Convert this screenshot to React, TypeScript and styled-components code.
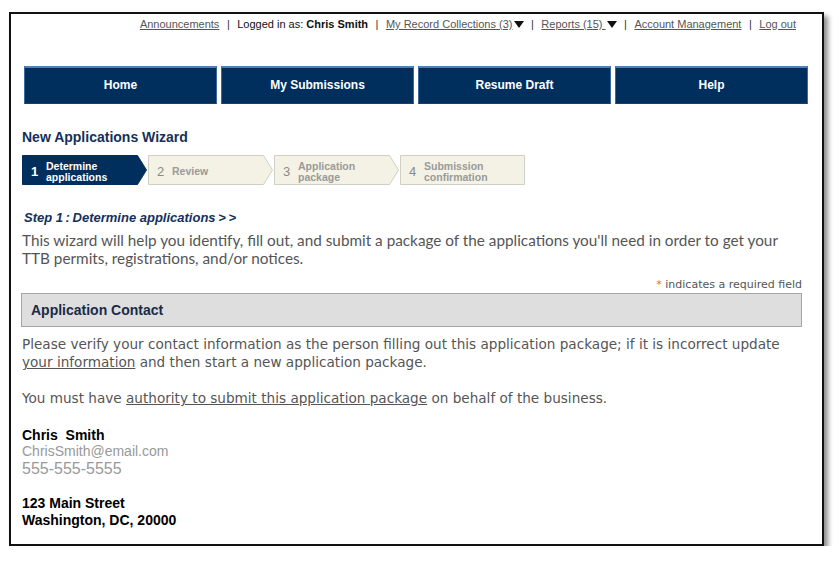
import React from "react";
import styled, { createGlobalStyle } from "styled-components";

const Global = createGlobalStyle`
  html, body { margin: 0; padding: 0; background: #fff; }
  body { font-family: "Liberation Sans", Arial, sans-serif; }
`;

const Frame = styled.div`
  box-sizing: border-box;
  margin: 12px 0 0 9px;
  width: 815px;
  height: 534px;
  border: 2px solid #111;
  background: #fff;
  box-shadow: 4px 4px 5px rgba(0, 0, 0, 0.45);
  overflow: hidden;
`;

const TopLinks = styled.div`
  display: flex;
  justify-content: flex-end;
  align-items: center;
  padding: 3px 26px 0 0;
  height: 14px;
  font-size: 11px;
  line-height: 14px;
  color: #111;
  white-space: pre;
`;

const TopLink = styled.a`
  color: #555;
  text-decoration: underline;
  cursor: pointer;
`;

const Sep = styled.span`
  color: #333;
  margin: 0 7.5px;
`;

const Caret = styled.svg`
  width: 10px;
  height: 7px;
  margin-left: 1px;
`;

const Nav = styled.nav`
  display: grid;
  grid-template-columns: repeat(4, 193px);
  gap: 4px;
  margin: 35px 0 0 13px;
`;

const NavButton = styled.div`
  box-sizing: border-box;
  height: 38px;
  background: #002f5e;
  border-top: 2px solid #4d7fb8;
  border-left: 1px solid #3a6aa0;
  border-right: 1px solid #3a6aa0;
  border-bottom: 1px solid #1d3f66;
  color: #fff;
  font-weight: bold;
  font-size: 12px;
  display: flex;
  align-items: center;
  justify-content: center;
  padding-bottom: 2px;
`;

const Content = styled.div`
  padding: 0 20px 0 11px;
`;

const Title = styled.h1`
  margin: 24px 0 0 0;
  font-size: 14px;
  line-height: 18px;
  font-weight: bold;
  color: #15305a;
`;

const Steps = styled.div`
  display: flex;
  gap: 1px;
  margin-top: 9px;
  height: 30px;
`;

const Step = styled.div<{ $active?: boolean }>`
  position: relative;
  width: 125px;
  height: 30px;
  display: flex;
  align-items: center;
  padding: 3px 0 0 9px;
  box-sizing: border-box;
  color: ${(p) => (p.$active ? "#fff" : "#9a9a9a")};
`;

const StepShape = styled.svg`
  position: absolute;
  inset: 0;
  width: 125px;
  height: 30px;
`;

const StepNum = styled.span<{ $active?: boolean }>`
  position: relative;
  font-size: 13px;
  font-weight: ${(p) => (p.$active ? "bold" : "normal")};
  color: ${(p) => (p.$active ? "#fff" : "#8a8a8a")};
  width: 15px;
`;

const StepLabel = styled.span`
  position: relative;
  font-size: 10.5px;
  font-weight: bold;
  line-height: 10.5px;
`;

const StepHeading = styled.div`
  margin: 24px 0 0 2px;
  font-size: 13px;
  line-height: 18px;
  font-style: italic;
  font-weight: bold;
  color: #15305a;
  white-space: pre;
`;

const Intro = styled.p`
  margin: 4px 0 0 0;
  font-family: Lato, "Open Sans", sans-serif;
  font-size: 15.3px;
  line-height: 18px;
  color: #555;
`;

const Required = styled.div`
  margin-top: 10px;
  text-align: right;
  font-family: "DejaVu Sans", Verdana, sans-serif;
  font-size: 11px;
  line-height: 14px;
  color: #555;
  padding-top: 1px;
`;

const Star = styled.span`
  color: #e0703c;
`;

const SectionBox = styled.div`
  box-sizing: border-box;
  margin: 1px 0 0 -1px;
  height: 34px;
  background: #dedede;
  border: 1px solid #a6a6a6;
  display: flex;
  align-items: center;
  padding-left: 9px;
  font-size: 14px;
  font-weight: bold;
  color: #1a2b48;
`;

const Body = styled.p<{ $gap: number }>`
  margin: ${(p) => p.$gap}px 0 0 0;
  font-family: "DejaVu Sans", Verdana, sans-serif;
  font-size: 13.6px;
  line-height: 18px;
  color: #555;
`;

const BodyLink = styled.a`
  color: #555;
  text-decoration: underline;
`;

const Contact = styled.div`
  margin-top: 20px;
  display: flex;
  flex-direction: column;
`;

const Line = styled.div<{ $size: number; $lh: number; $bold?: boolean; $gray?: boolean }>`
  font-size: ${(p) => p.$size}px;
  line-height: ${(p) => p.$lh}px;
  font-weight: ${(p) => (p.$bold ? "bold" : "normal")};
  color: ${(p) => (p.$gray ? "#999" : "#000")};
  white-space: pre;
`;

const Address = styled.div`
  margin-top: 16px;
`;

const CaretIcon = () => (
  <Caret viewBox="0 0 10 7">
    <polygon points="0,0 10,0 5,7" fill="#111" />
  </Caret>
);

const steps = [
  { n: "1", label: ["Determine", "applications"], active: true, arrow: true },
  { n: "2", label: ["Review"], active: false, arrow: true },
  { n: "3", label: ["Application", "package"], active: false, arrow: true },
  { n: "4", label: ["Submission", "confirmation"], active: false, arrow: false },
];

export default function App() {
  return (
    <>
      <Global />
      <Frame>
        <TopLinks>
          <TopLink>Announcements</TopLink>
          <Sep>|</Sep>
          <span>Logged in as: </span>
          <b>Chris Smith</b>
          <Sep>|</Sep>
          <TopLink>My Record Collections (3)</TopLink>
          <CaretIcon />
          <Sep>|</Sep>
          <TopLink>Reports (15) </TopLink>
          <CaretIcon />
          <Sep>|</Sep>
          <TopLink>Account Management</TopLink>
          <Sep>|</Sep>
          <TopLink>Log out</TopLink>
        </TopLinks>
        <Nav>
          <NavButton>Home</NavButton>
          <NavButton>My Submissions</NavButton>
          <NavButton>Resume Draft</NavButton>
          <NavButton>Help</NavButton>
        </Nav>
        <Content>
          <Title>New Applications Wizard</Title>
          <Steps>
            {steps.map((s) => (
              <Step key={s.n} $active={s.active}>
                <StepShape viewBox="0 0 125 30">
                  <polygon
                    points={
                      s.arrow
                        ? "0.5,0.5 115.5,0.5 124.5,15 115.5,29.5 0.5,29.5"
                        : "0.5,0.5 124.5,0.5 124.5,29.5 0.5,29.5"
                    }
                    fill={s.active ? "#002f5e" : "#f4f2e4"}
                    stroke={s.active ? "#002f5e" : "#cfcfc4"}
                    strokeWidth="1"
                  />
                </StepShape>
                <StepNum $active={s.active}>{s.n}</StepNum>
                <StepLabel>
                  {s.label.map((l, i) => (
                    <React.Fragment key={l}>
                      {i > 0 && <br />}
                      {l}
                    </React.Fragment>
                  ))}
                </StepLabel>
              </Step>
            ))}
          </Steps>
          <StepHeading>{"Step 1\u2009:\u2009Determine applications\u2009>\u2009>"}</StepHeading>
          <Intro>
            This wizard will help you identify, fill out, and submit a package of the
            applications you'll need in order to get your TTB permits, registrations, and/or
            notices.
          </Intro>
          <Required>
            <Star>*</Star> indicates a required field
          </Required>
          <SectionBox>Application Contact</SectionBox>
          <Body $gap={8}>
            Please verify your contact information as the person filling out this application
            package; if it is incorrect update <BodyLink>your information</BodyLink> and then
            start a new application package.
          </Body>
          <Body $gap={18}>
            You must have <BodyLink>authority to submit this application package</BodyLink> on
            behalf of the business.
          </Body>
          <Contact>
            <Line $size={14} $lh={16} $bold>
              {"Chris  Smith"}
            </Line>
            <Line $size={14} $lh={16} $gray>
              ChrisSmith@email.com
            </Line>
            <Line $size={16} $lh={20} $gray>
              555-555-5555
            </Line>
            <Address>
              <Line $size={14} $lh={17} $bold>
                123 Main Street
              </Line>
              <Line $size={14} $lh={17} $bold>
                Washington, DC, 20000
              </Line>
            </Address>
          </Contact>
        </Content>
      </Frame>
    </>
  );
}
